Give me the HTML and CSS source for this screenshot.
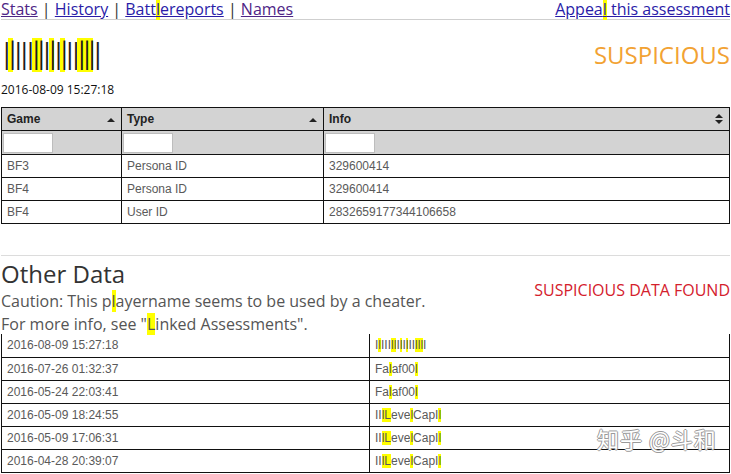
FILE: index.html
```html
<!DOCTYPE html>
<html lang="en">
<head>
  <meta charset="UTF-8" />
  <title>Assessment</title>
  <link rel="stylesheet" href="styles.css">
</head>
<body>
  <div class="topnav">
    <div class="links">
      <a href="#" class="seen">Stats</a> | <a href="#">History</a> | <a href="#">Batt<span class="hl">l</span>ereports</a> | <a href="#" class="seen">Names</a>
    </div>
    <a href="#">Appea<span class="hl">l</span> this assessment</a>
  </div>

  <div class="player">
    <div>
      <div class="player-name">I<span class="hl">l</span>III<span class="hl">ll</span>I<span class="hl">l</span>I<span class="hl">l</span>II<span class="hl">lll</span>I</div>
      <div class="stamp">2016-08-09 15:27:18</div>
    </div>
    <div class="verdict">SUSPICIOUS</div>
  </div>

  <table class="grid ids">
    <thead>
      <tr class="head">
        <th class="c-game">Game <span class="sort up"></span></th>
        <th class="c-type">Type <span class="sort up"></span></th>
        <th>Info <span class="sort both"></span></th>
      </tr>
      <tr class="filters">
        <th><input type="text"></th>
        <th><input type="text"></th>
        <th><input type="text"></th>
      </tr>
    </thead>
    <tbody>
      <tr><td>BF3</td><td>Persona ID</td><td>329600414</td></tr>
      <tr><td>BF4</td><td>Persona ID</td><td>329600414</td></tr>
      <tr><td>BF4</td><td>User ID</td><td>2832659177344106658</td></tr>
    </tbody>
  </table>

  <hr class="sep">

  <div class="other">
    <div class="other-head">
      <h2>Other Data</h2>
      <p class="caution">Caution: This p<span class="hl">l</span>ayername seems to be used by a cheater.<br>For more info, see "<span class="hl">L</span>inked Assessments".</p>
    </div>
    <div class="alert">SUSPICIOUS DATA FOUND</div>
  </div>

  <table class="grid names">
    <tbody>
      <tr><td>2016-08-09 15:27:18</td><td>I<span class="hl">l</span>III<span class="hl">ll</span>I<span class="hl">l</span>I<span class="hl">l</span>II<span class="hl">lll</span>I</td></tr>
      <tr><td>2016-07-26 01:32:37</td><td>Fa<span class="hl">l</span>af00<span class="hl">l</span></td></tr>
      <tr><td>2016-05-24 22:03:41</td><td>Fa<span class="hl">l</span>af00<span class="hl">l</span></td></tr>
      <tr><td>2016-05-09 18:24:55</td><td>II<span class="hl">lL</span>eve<span class="hl">l</span>CapI<span class="hl">l</span></td></tr>
      <tr><td>2016-05-09 17:06:31</td><td>II<span class="hl">lL</span>eve<span class="hl">l</span>CapI<span class="hl">l</span></td></tr>
      <tr><td>2016-04-28 20:39:07</td><td>II<span class="hl">lL</span>eve<span class="hl">l</span>CapI<span class="hl">l</span></td></tr>
    </tbody>
  </table>

  <div class="watermark">知乎 @斗和</div>
</body>
</html>
```

FILE: styles.css
```css
* {
  box-sizing: border-box;
}

body {
  margin: 0;
  padding: 0 1px;
  height: 474px;
  overflow: hidden;
  background: #fff;
  color: #222;
  font-family: "Open Sans", "Liberation Sans", sans-serif;
  position: relative;
}

.hl {
  background: #ffff00;
}

/* top links */
.topnav {
  display: flex;
  justify-content: space-between;
  font-size: 16px;
  line-height: 19px;
  padding-bottom: 0;
  color: #333;
  border-bottom: 1px solid #cfcfcf;
}

.topnav a {
  color: #2a1ca8;
}

.topnav a.seen {
  color: #4e2586;
}

/* player block */
.player {
  display: flex;
  justify-content: space-between;
  align-items: flex-start;
  padding-top: 18px;
  height: 87px;
}

.player-name {
  font-family: "Open Sans", sans-serif;
  font-weight: 300;
  font-size: 38px;
  letter-spacing: -3.4px;
  line-height: 34px;
  height: 34px;
  color: #1e1e1e;
  padding-left: 1px;
}

.player-name .hl {
  display: inline-block;
  vertical-align: top;
  height: 34px;
  line-height: 34px;
}

.stamp {
  font-size: 12px;
  margin-top: 9px;
  color: #111;
}

.verdict {
  font-size: 24px;
  color: #f2a233;
  margin-top: 0;
}

/* tables */
.grid {
  width: 729px;
  border-collapse: collapse;
  font-family: "Liberation Sans", Arial, sans-serif;
  font-size: 12px;
  color: #5a5a5a;
}

.grid td,
.grid th {
  border: 1px solid #111;
  height: 23px;
  padding: 0 5px;
  text-align: left;
}

.ids .head th {
  background: #d3d3d3;
  color: #222;
  font-weight: bold;
  position: relative;
}

.ids .c-game {
  width: 120px;
}

.ids .c-type {
  width: 202px;
}

.ids .filters th {
  background: #d3d3d3;
  padding: 0 1px;
  height: 24px;
}

.ids .filters input {
  display: block;
  width: 50px;
  height: 20px;
  border: 1px solid #bdbdbd;
  background: #fff;
  margin: 0;
}

.sort {
  position: absolute;
  right: 6px;
  top: 9px;
  width: 8px;
  height: 8px;
}

.sort.up::before,
.sort.both::before,
.sort.both::after {
  content: "";
  position: absolute;
  left: 0;
  border-left: 4px solid transparent;
  border-right: 4px solid transparent;
}

.sort.up::before {
  top: 1px;
  border-bottom: 4px solid #222;
}

.sort.both {
  top: 6px;
  height: 11px;
}

.sort.both::before {
  top: 0;
  border-bottom: 4px solid #222;
}

.sort.both::after {
  top: 6px;
  border-top: 4px solid #222;
}

.sep {
  margin: 31px 0 0;
  border: 0;
  border-top: 1px solid #dcdcdc;
}

/* other data */
.other {
  display: flex;
  justify-content: space-between;
  align-items: flex-start;
}

.other h2 {
  margin: 1px 0 0;
  font-size: 24px;
  font-weight: normal;
  line-height: 33px;
  color: #333;
}

.caution {
  margin: 0;
  font-size: 16px;
  line-height: 23px;
  color: #555;
}

.alert {
  margin-top: 23px;
  font-size: 16px;
  color: #d4202c;
}

.names {
  margin-top: -2px;
}

.names td:first-child {
  width: 368px;
}

.names tr:first-child td {
  border-top: 0;
}

.watermark {
  position: absolute;
  left: 597px;
  top: 422px;
  font-family: "Noto Sans CJK SC", sans-serif;
  font-size: 22px;
  letter-spacing: 1px;
  color: #fff;
  text-shadow: 1px 0 0 #9a9a9a, -1px 0 0 #9a9a9a, 0 1px 0 #9a9a9a, 0 -1px 0 #9a9a9a;
}
```
